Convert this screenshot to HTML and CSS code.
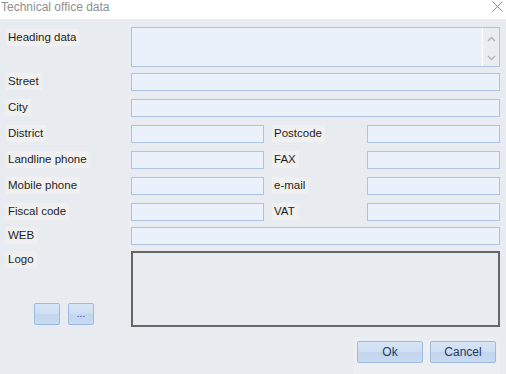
FILE: index.html
```html
<!DOCTYPE html>
<html>
<head>
<meta charset="utf-8">
<link rel="stylesheet" href="styles.css">
</head>
<body>
<div class="window">
  <div class="titlebar">
    <span class="title">Technical office data</span>
    <svg class="close" width="11" height="11" viewBox="0 0 11 11"><path d="M0.5 0.5 L10.5 10.5 M10.5 0.5 L0.5 10.5" stroke="#8a8a8a" stroke-width="1"/></svg>
  </div>
  <div class="content">
    <div class="row r-heading">
      <div class="cell-label"><span class="lbl">Heading data</span></div>
      <div class="memo span3">
        <div class="memo-text"></div>
        <div class="memo-scroll">
          <svg width="9" height="6" viewBox="0 0 9 6"><path d="M1 5 L4.5 1.5 L8 5" fill="none" stroke="#b4b4b4" stroke-width="1.5"/></svg>
          <svg width="9" height="6" viewBox="0 0 9 6"><path d="M1 1 L4.5 4.5 L8 1" fill="none" stroke="#b4b4b4" stroke-width="1.5"/></svg>
        </div>
      </div>
    </div>
    <div class="row tight">
      <div class="cell-label"><span class="lbl">Street</span></div>
      <div class="field span3"></div>
    </div>
    <div class="row">
      <div class="cell-label"><span class="lbl">City</span></div>
      <div class="field span3"></div>
    </div>
    <div class="row">
      <div class="cell-label"><span class="lbl">District</span></div>
      <div class="field"></div>
      <div class="cell-label2"><span class="lbl">Postcode</span></div>
      <div class="field"></div>
    </div>
    <div class="row">
      <div class="cell-label"><span class="lbl">Landline phone</span></div>
      <div class="field"></div>
      <div class="cell-label2"><span class="lbl">FAX</span></div>
      <div class="field"></div>
    </div>
    <div class="row">
      <div class="cell-label"><span class="lbl">Mobile phone</span></div>
      <div class="field"></div>
      <div class="cell-label2"><span class="lbl">e-mail</span></div>
      <div class="field"></div>
    </div>
    <div class="row">
      <div class="cell-label"><span class="lbl">Fiscal code</span></div>
      <div class="field"></div>
      <div class="cell-label2"><span class="lbl">VAT</span></div>
      <div class="field"></div>
    </div>
    <div class="row tight">
      <div class="cell-label"><span class="lbl">WEB</span></div>
      <div class="field span3"></div>
    </div>
    <div class="row tight r-logo">
      <div class="cell-label logo-label">
        <span class="lbl">Logo</span>
        <div class="small-btns">
          <button class="sbtn"></button>
          <button class="sbtn">...</button>
        </div>
      </div>
      <div class="logo-box span3"></div>
    </div>
    <div class="footer">
      <div class="btn-panel">
        <button class="btn">Ok</button>
        <button class="btn">Cancel</button>
      </div>
    </div>
  </div>
</div>
</body>
</html>
```

FILE: styles.css
```css
* { box-sizing: border-box; }
html, body {
  margin: 0;
  padding: 0;
  width: 506px;
  height: 374px;
  overflow: hidden;
  background: #e8ebf0;
  font-family: "Liberation Sans", Arial, sans-serif;
}
.window {
  width: 506px;
  height: 374px;
  display: flex;
  flex-direction: column;
}
.titlebar {
  height: 19px;
  background: #ffffff;
  display: flex;
  align-items: center;
  justify-content: space-between;
  padding: 0 3px 0 1px;
}
.title {
  font-size: 12px;
  color: #8f8f8f;
  line-height: 14px;
  margin-top: -5px;
}
.close {
  margin-top: -7px;
}
.content {
  flex: 1;
  display: flex;
  flex-direction: column;
  padding: 8px 6px 0 6px;
}
.row {
  display: grid;
  grid-template-columns: 125px 133px 8px 95px 133px;
  height: 18px;
  margin-top: 8px;
}
.row.tight { margin-top: 6px; }
.r-heading { height: 40px; margin-top: 0; }
.r-logo { height: 76px; }
.span3 { grid-column: 2 / 6; }
.cell-label, .cell-label2 {
  display: flex;
  align-items: flex-start;
}
.cell-label2 { grid-column: 4; }
.lbl {
  display: inline-block;
  background: #f0f0f0;
  color: #1e1e1e;
  font-size: 11.5px;
  line-height: 17px;
  height: 17px;
  padding: 0 3px 0 2px;
  margin-top: 0;
}
.r-heading .lbl { margin-top: 2px; }
.field {
  background: #eaf1fb;
  border: 1px solid #adc4e3;
}
.memo {
  background: #eaf1fb;
  border: 1px solid #adc4e3;
  display: flex;
}
.memo-text { flex: 1; }
.memo-scroll {
  width: 17px;
  border-left: 1px solid #ffffff;
  background: #e9ecf1;
  display: flex;
  flex-direction: column;
  align-items: center;
  justify-content: space-between;
  padding: 8px 0 5px 0;
}
.logo-label {
  flex-direction: column;
  justify-content: space-between;
}
.small-btns {
  display: flex;
  gap: 8px;
  margin-left: 28px;
  margin-bottom: 2px;
}
.sbtn {
  width: 26px;
  height: 22px;
  border: 1px solid #9dbbe0;
  border-radius: 2px;
  background: linear-gradient(#d6e4f5 0%, #cfdff3 48%, #c3d6ee 52%, #c8daf0 100%);
  padding: 0;
  font-family: "Liberation Sans", Arial, sans-serif;
  font-size: 10px;
  color: #3a3ad0;
  line-height: 20px;
}
.logo-box {
  border: 2px solid #666666;
  background: #e8ebf0;
}
.footer {
  flex: 1;
  display: flex;
  justify-content: flex-end;
  align-items: flex-start;
  padding-top: 10px;
}
.btn-panel {
  background: #eceef2;
  display: flex;
  gap: 7px;
  padding: 4px 4px 11px 4px;
}
.btn {
  width: 66px;
  height: 22px;
  border: 1px solid #9dbbe0;
  border-radius: 2px;
  background: linear-gradient(#d6e4f5 0%, #cfdff3 48%, #c3d6ee 52%, #c8daf0 100%);
  font-family: "Liberation Sans", Arial, sans-serif;
  font-size: 12px;
  color: #1e3a5f;
  padding: 0;
}
```
